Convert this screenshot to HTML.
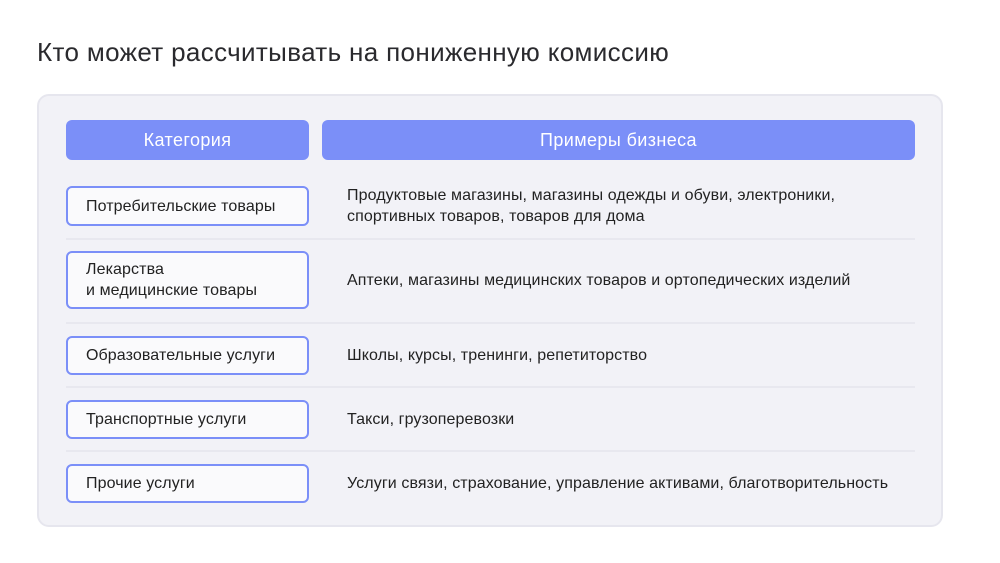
<!DOCTYPE html>
<html><head><meta charset="utf-8"><style>
*{margin:0;padding:0;box-sizing:border-box}
body{width:1000px;height:563px;background:#fff;font-family:"Liberation Sans",sans-serif;color:#222;position:relative;overflow:hidden}
h1{position:absolute;left:37px;top:37px;font-size:26px;font-weight:400;color:#2a2a2e;letter-spacing:0.35px}
.panel{position:absolute;left:37px;top:94px;width:906px;height:433px;background:#f2f2f7;border:2px solid #e6e6ee;border-radius:12px}
.hd{position:absolute;top:120px;height:40px;background:#7b8ff8;border-radius:6px;color:#fff;font-size:18px;letter-spacing:0.4px;display:flex;align-items:center;justify-content:center}
.box{position:absolute;left:66px;width:243px;background:#fafafc;border:2.5px solid #7b8ff8;border-radius:6px;font-size:16px;letter-spacing:0.1px;padding-left:18px;display:flex;align-items:center;line-height:21px}
.tx{position:absolute;left:347px;font-size:16px;letter-spacing:0.1px;line-height:21px;display:flex;align-items:center}
.sep{position:absolute;left:66px;width:849px;height:2px;background:#e8e8ef}
</style></head><body>
<h1>Кто может рассчитывать на пониженную комиссию</h1>
<div class="panel"></div>
<div class="hd" style="left:66px;width:243px">Категория</div>
<div class="hd" style="left:322px;width:593px">Примеры бизнеса</div>

<div class="box" style="top:186px;height:40px">Потребительские товары</div>
<div class="tx" style="top:184px;height:44px">Продуктовые магазины, магазины одежды и обуви, электроники,<br>спортивных товаров, товаров для дома</div>
<div class="sep" style="top:238px"></div>

<div class="box" style="top:251px;height:58px">Лекарства<br>и медицинские товары</div>
<div class="tx" style="top:251px;height:58px">Аптеки, магазины медицинских товаров и ортопедических изделий</div>
<div class="sep" style="top:322px"></div>

<div class="box" style="top:336px;height:39px">Образовательные услуги</div>
<div class="tx" style="top:336px;height:39px">Школы, курсы, тренинги, репетиторство</div>
<div class="sep" style="top:386px"></div>

<div class="box" style="top:400px;height:39px">Транспортные услуги</div>
<div class="tx" style="top:400px;height:39px">Такси, грузоперевозки</div>
<div class="sep" style="top:450px"></div>

<div class="box" style="top:464px;height:39px">Прочие услуги</div>
<div class="tx" style="top:464px;height:39px">Услуги связи, страхование, управление активами, благотворительность</div>
</body></html>
